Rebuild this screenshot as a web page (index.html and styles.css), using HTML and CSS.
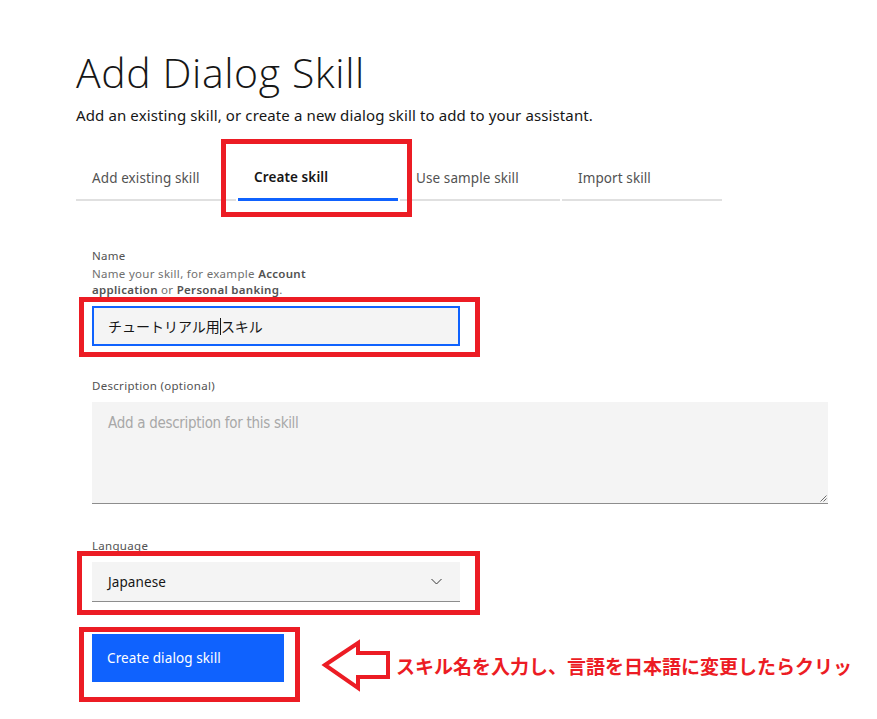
FILE: index.html
```html
<!DOCTYPE html>
<html lang="ja">
<head>
<meta charset="utf-8">
<title>Add Dialog Skill</title>
<link rel="stylesheet" href="styles.css">
</head>
<body>
<main class="page">
  <h1 class="title">Add Dialog Skill</h1>
  <p class="subtitle">Add an existing skill, or create a new dialog skill to add to your assistant.</p>

  <nav class="tabs">
    <div class="tab">Add existing skill</div>
    <div class="tab tab-active">Create skill</div>
    <div class="tab">Use sample skill</div>
    <div class="tab">Import skill</div>
  </nav>

  <form class="form">
    <div class="field field-name">
      <div class="label">Name</div>
      <div class="helper">Name your skill, for example <b>Account application</b> or <b>Personal banking</b>.</div>
      <div class="input input-focus">チュートリアル用<span class="caret"></span>スキル</div>
    </div>

    <div class="field field-desc">
      <div class="label">Description (optional)</div>
      <div class="textarea"><span class="placeholder">Add a description for this skill</span>
        <svg class="grip" width="7" height="7" viewBox="0 0 7 7"><path d="M6.5 0.5 L0.5 6.5 M6.5 3.5 L3.5 6.5" stroke="#6f6f6f" stroke-width="1"/></svg>
      </div>
    </div>

    <div class="field field-lang">
      <div class="label">Language</div>
      <div class="select">
        <span>Japanese</span>
        <svg class="chevron" width="11" height="7" viewBox="0 0 11 7"><path d="M0.5 1 L5.5 6 L10.5 1" fill="none" stroke="#393939" stroke-width="1"/></svg>
      </div>
    </div>

    <div class="actions">
      <button type="button" class="btn">Create dialog skill</button>
    </div>
  </form>

  <div class="annot annot-tab"></div>
  <div class="annot annot-name"></div>
  <div class="annot annot-lang"></div>
  <div class="annot annot-btn"></div>
  <svg class="arrow" width="72" height="54" viewBox="0 0 72 54">
    <path d="M5 27 L38 5 L38 15 L68 15 L68 39 L38 39 L38 50 Z" fill="#fff" stroke="#ec1c24" stroke-width="4" stroke-linejoin="miter"/>
  </svg>
  <div class="callout">スキル名を入力し、言語を日本語に変更したらクリッ</div>
</main>
</body>
</html>
```

FILE: styles.css
```css
html, body {
  margin: 0;
  padding: 0;
  background: #fff;
}
.page {
  position: relative;
  width: 877px;
  height: 719px;
  overflow: hidden;
  padding-left: 76px;
  box-sizing: border-box;
  font-family: "Noto Sans", "Open Sans", "Noto Sans CJK JP", sans-serif;
  color: #161616;
}
.title {
  margin: 0;
  padding-top: 46px;
  font-family: "Open Sans", sans-serif;
  font-weight: 300;
  font-size: 41px;
  line-height: 52px;
  letter-spacing: 0.6px;
  color: #161616;
}
.subtitle {
  margin: 6px 0 0;
  font-size: 15px;
  line-height: 22px;
  letter-spacing: 0.12px;
  color: #161616;
}
.tabs {
  display: flex;
  gap: 2px;
  margin-top: 31px;
}
.tab {
  width: 160px;
  box-sizing: border-box;
  padding: 0 16px;
  height: 44px;
  line-height: 42px;
  font-size: 13.5px;
  letter-spacing: 0.1px;
  color: #525252;
  border-bottom: 2px solid #e0e0e0;
}
.tab-active {
  font-weight: 600;
  color: #161616;
  border-bottom: 3px solid #0f62fe;
  line-height: 41px;
}
.form {
  padding-left: 16px;
  margin-top: 47px;
}
.label {
  font-size: 11.5px;
  line-height: 16px;
  letter-spacing: 0.3px;
  color: #525252;
}
.helper {
  width: 236px;
  font-size: 11.5px;
  line-height: 16px;
  letter-spacing: 0.3px;
  color: #6f6f6f;
  margin-top: 2px;
}
.helper b {
  font-weight: 600;
  color: #525252;
}
.input {
  margin-top: 8px;
  width: 368px;
  height: 40px;
  box-sizing: border-box;
  background: #f4f4f4;
  padding: 0 14px;
  font-family: "Noto Sans CJK JP", sans-serif;
  font-size: 14px;
  line-height: 36px;
  color: #161616;
}
.input-focus {
  border: 2px solid #0f62fe;
}
.caret {
  display: inline-block;
  width: 1px;
  height: 17px;
  background: #161616;
  vertical-align: -3px;
}
.field-desc {
  margin-top: 32px;
}
.textarea {
  position: relative;
  margin-top: 8px;
  width: 736px;
  height: 102px;
  box-sizing: border-box;
  background: #f4f4f4;
  border-bottom: 1px solid #8d8d8d;
  padding: 10px 16px;
  line-height: 20px;
}
.placeholder {
  font-family: "DejaVu Sans", sans-serif;
  font-stretch: condensed;
  font-size: 15px;
  letter-spacing: -0.3px;
  color: #a8a8a8;
}
.grip {
  position: absolute;
  right: 1px;
  bottom: 1px;
}
.field-lang {
  margin-top: 34px;
}
.select {
  margin-top: 8px;
  width: 368px;
  height: 40px;
  box-sizing: border-box;
  background: #f4f4f4;
  border-bottom: 1px solid #8d8d8d;
  padding: 0 18px 0 16px;
  display: flex;
  align-items: center;
  justify-content: space-between;
  font-size: 13.5px;
  letter-spacing: 0.1px;
  color: #161616;
}
.actions {
  margin-top: 32px;
}
.btn {
  width: 192px;
  height: 48px;
  border: 0;
  margin: 0;
  background: #0f62fe;
  color: #fff;
  font-family: "Noto Sans", sans-serif;
  font-size: 13.5px;
  letter-spacing: 0.1px;
  text-align: left;
  padding: 0 15px;
}
.annot {
  position: absolute;
  border: 5px solid #ec1c24;
  box-sizing: border-box;
}
.annot-tab { left: 221px; top: 139px; width: 191px; height: 78px; }
.annot-name { left: 79px; top: 297px; width: 401px; height: 60px; }
.annot-lang { left: 77px; top: 551px; width: 403px; height: 64px; }
.annot-btn { left: 79px; top: 627px; width: 221px; height: 75px; }
.arrow {
  position: absolute;
  left: 320px;
  top: 638px;
}
.callout {
  position: absolute;
  left: 396px;
  top: 653px;
  font-family: "Noto Sans CJK JP", sans-serif;
  font-weight: 700;
  font-size: 19px;
  line-height: 26px;
  color: #ec1c24;
  white-space: nowrap;
}
```
